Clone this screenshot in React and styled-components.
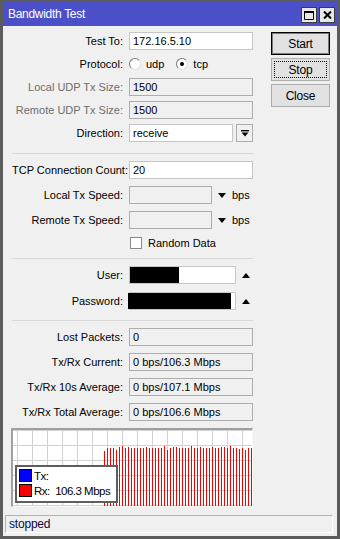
import React from 'react'
import styled, { createGlobalStyle } from 'styled-components';

const GlobalStyle = createGlobalStyle`
    html, body {
        margin: 0;
        padding: 0;
        background: #f0f0f0;
    }
    body {
        font-family: "Liberation Sans", Arial, sans-serif;
        font-size: 11px;
        color: #000;
    }
`

// rx bar tops, in chart pixels
const barTops = [
    21, 18, 18, 18, 20, 17, 16, 18, 17, 18, 18, 18, 18, 18, 17, 18, 18, 18, 18, 18,
    16, 20, 18, 17, 17, 18, 18, 18, 18, 16, 18, 18, 17, 18, 18, 18, 17, 18, 18, 17,
    17, 18, 16, 18, 18, 19, 18, 20, 18, 18,
];

const DownArrow = () => (
    <svg width="8" height="5" viewBox="0 0 8 5"><path d="M0 0h8L4 5z" fill="#000"/></svg>
);

const UpArrow = () => (
    <svg width="8" height="5" viewBox="0 0 8 5"><path d="M0 5h8L4 0z" fill="#000"/></svg>
);

const DropIcon = () => (
    <svg width="8" height="7" viewBox="0 0 8 7">
        <rect x="0" y="0" width="8" height="1.4" fill="#000"/>
        <path d="M0.5 2.5h7L4 6.5z" fill="#000"/>
    </svg>
);

const ChartGrid = () => {
    const vLines = [];
    for (let x = 4.5; x < 240; x += 15) vLines.push(x);
    const hLines = [];
    for (let y = 0.5; y < 77; y += 15) hLines.push(y);
    return (
        <svg width="239" height="76" viewBox="0 0 239 76" style={{display: 'block'}}>
            {vLines.map(x => <line key={'v' + x} x1={x} x2={x} y1="0" y2="76" stroke="#d2d2d2" strokeWidth="1"/>)}
            {hLines.map(y => <line key={'h' + y} x1="0" x2="239" y1={y} y2={y} stroke="#d2d2d2" strokeWidth="1"/>)}
            {barTops.map((t, i) => (
                <line key={'b' + i} x1={91.5 + i * 3} x2={91.5 + i * 3} y1={t} y2="76" stroke="#ff0000" strokeWidth="1"/>
            ))}
        </svg>
    );
}

const BandwidthTest = () => {
    return (
        <Window>
            <TitleBar>
                <Title>Bandwidth Test</Title>
                <TitleButtons>
                    <TitleButton>
                        <svg width="10" height="9" viewBox="0 0 10 9"><path d="M0.5 0.5h9v8h-9z M0.5 1.5h9" stroke="#000" strokeWidth="1" fill="none"/><rect x="0" y="0" width="10" height="2" fill="#000"/></svg>
                    </TitleButton>
                    <TitleButton>
                        <svg width="9" height="8" viewBox="0 0 9 8"><path d="M1 0.5l7 7M8 0.5l-7 7" stroke="#000" strokeWidth="2" fill="none"/></svg>
                    </TitleButton>
                </TitleButtons>
            </TitleBar>
            <Body>
                <Main>
                    <LeftColumn>
                        <Section $gap={5}>
                            <Row>
                                <Label>Test To:</Label>
                                <Field>172.16.5.10</Field>
                            </Row>
                            <Row>
                                <Label>Protocol:</Label>
                                <Radios>
                                    <RadioItem><Radio /> udp</RadioItem>
                                    <RadioItem><Radio $checked /> tcp</RadioItem>
                                </Radios>
                            </Row>
                            <Row>
                                <Label $disabled>Local UDP Tx Size:</Label>
                                <Field $disabled>1500</Field>
                            </Row>
                            <Row>
                                <Label $disabled>Remote UDP Tx Size:</Label>
                                <Field $disabled>1500</Field>
                            </Row>
                            <Row>
                                <Label>Direction:</Label>
                                <Inline>
                                    <Field $width={104}>receive</Field>
                                    <DropButton><DropIcon/></DropButton>
                                </Inline>
                            </Row>
                        </Section>
                        <Separator $top={11} $bottom={7}/>
                        <Section $gap={7}>
                            <Row>
                                <Label>TCP Connection Count:</Label>
                                <Field>20</Field>
                            </Row>
                            <Row>
                                <Label>Local Tx Speed:</Label>
                                <Inline>
                                    <Field $disabled $width={83}/>
                                    <ArrowSlot><DownArrow/></ArrowSlot>
                                    <Unit>bps</Unit>
                                </Inline>
                            </Row>
                            <Row>
                                <Label>Remote Tx Speed:</Label>
                                <Inline>
                                    <Field $disabled $width={83}/>
                                    <ArrowSlot><DownArrow/></ArrowSlot>
                                    <Unit>bps</Unit>
                                </Inline>
                            </Row>
                            <Row $height={14}>
                                <span/>
                                <CheckItem><Checkbox/> Random Data</CheckItem>
                            </Row>
                        </Section>
                        <Separator $top={8} $bottom={7}/>
                        <Section $gap={8}>
                            <Row>
                                <Label>User:</Label>
                                <Inline>
                                    <Field $width={107}><Redacted $width={49}/></Field>
                                    <ArrowSlot $wide><UpArrow/></ArrowSlot>
                                </Inline>
                            </Row>
                            <Row>
                                <Label>Password:</Label>
                                <Inline>
                                    <Field $width={107}><Redacted $width={103} $shift={-2}/></Field>
                                    <ArrowSlot $wide><UpArrow/></ArrowSlot>
                                </Inline>
                            </Row>
                        </Section>
                        <Separator $top={10} $bottom={7}/>
                        <Section $gap={7}>
                            <Row>
                                <Label>Lost Packets:</Label>
                                <Field $disabled>0</Field>
                            </Row>
                            <Row>
                                <Label>Tx/Rx Current:</Label>
                                <Field $disabled>0 bps/106.3 Mbps</Field>
                            </Row>
                            <Row>
                                <Label>Tx/Rx 10s Average:</Label>
                                <Field $disabled>0 bps/107.1 Mbps</Field>
                            </Row>
                            <Row>
                                <Label>Tx/Rx Total Average:</Label>
                                <Field $disabled>0 bps/106.6 Mbps</Field>
                            </Row>
                        </Section>
                        <Chart>
                            <ChartGrid/>
                            <Legend>
                                <LegendItem><Swatch $color="#0000ff"/>Tx:</LegendItem>
                                <LegendItem><Swatch $color="#ff0000"/>Rx:  106.3 Mbps</LegendItem>
                            </Legend>
                        </Chart>
                    </LeftColumn>
                    <Buttons>
                        <Button $default>Start</Button>
                        <Button $focused>Stop</Button>
                        <Button>Close</Button>
                    </Buttons>
                </Main>
                <StatusBar>stopped</StatusBar>
            </Body>
        </Window>
    )
}

const Window = styled.div`
    box-sizing: border-box;
    width: 340px;
    height: 539px;
    border-style: solid;
    border-color: #5c5c5c;
    border-width: 1px 3px 3px 3px;
    background: #f0f0f0;
    display: flex;
    flex-direction: column;
`

const TitleBar = styled.div`
    height: 25px;
    background: #4b50c8;
    display: flex;
    align-items: center;
    justify-content: space-between;
    padding: 0 2px 0 5px;
`

const Title = styled.div`
    color: #fff;
    font-size: 12px;
    letter-spacing: -0.3px;
    padding-top: 1px;
`

const TitleButtons = styled.div`
    display: flex;
    gap: 2px;
    padding-top: 3px;
`

const TitleButton = styled.div`
    box-sizing: border-box;
    width: 16px;
    height: 16px;
    background: #e8e8e8;
    border: 1px solid #3c3c3c;
    display: flex;
    align-items: center;
    justify-content: center;
`

const Body = styled.div`
    flex: 1;
    display: flex;
    flex-direction: column;
    justify-content: space-between;
    padding: 6px 4px 3px 2px;
`

const Main = styled.div`
    display: flex;
    align-items: flex-start;
`

const LeftColumn = styled.div`
    width: 241px;
    padding-left: 7px;
`

const Section = styled.div`
    display: flex;
    flex-direction: column;
    gap: ${p => p.$gap}px;
`

const Row = styled.div`
    display: grid;
    grid-template-columns: 111px 1fr;
    column-gap: 6px;
    align-items: center;
    height: ${p => p.$height || 18}px;
`

const Label = styled.div`
    text-align: right;
    white-space: nowrap;
    color: ${p => p.$disabled ? '#6d6d6d' : '#000'};
`

const Field = styled.div`
    box-sizing: border-box;
    width: ${p => p.$width ? p.$width + 'px' : '100%'};
    height: 18px;
    padding: 0 3px;
    line-height: 16px;
    white-space: nowrap;
    overflow: visible;
    background: ${p => p.$disabled ? '#f0f0f0' : '#fff'};
    border: 1px solid ${p => p.$disabled ? '#adadad' : '#c6c6c6'};
    position: relative;
`

const Redacted = styled.span`
    display: block;
    width: ${p => p.$width}px;
    height: 16px;
    margin-left: ${p => (p.$shift || 0) - 3}px;
    background: #000;
`

const Inline = styled.div`
    display: flex;
    align-items: center;
`

const DropButton = styled.div`
    box-sizing: border-box;
    width: 17px;
    height: 18px;
    margin-left: 3px;
    border: 1px solid #adadad;
    background: #f0f0f0;
    display: flex;
    align-items: center;
    justify-content: center;
`

const ArrowSlot = styled.div`
    width: ${p => p.$wide ? 19 : 20}px;
    display: flex;
    justify-content: center;
    align-items: center;
`

const Unit = styled.span`
    padding-left: 0px;
`

const Radios = styled.div`
    display: flex;
    gap: 12px;
`

const RadioItem = styled.div`
    display: flex;
    align-items: center;
    gap: 5px;
`

const Radio = styled.span`
    box-sizing: border-box;
    width: 12px;
    height: 12px;
    border-radius: 50%;
    border: 1px solid #7a7a7a;
    border-right-color: #e0e0e0;
    border-bottom-color: #e0e0e0;
    background: #fff;
    position: relative;

    &::after {
        content: '';
        display: ${p => p.$checked ? 'block' : 'none'};
        position: absolute;
        left: 3px;
        top: 3px;
        width: 4px;
        height: 4px;
        border-radius: 50%;
        background: #000;
    }
`

const CheckItem = styled.div`
    display: flex;
    align-items: center;
    gap: 6px;
    padding-left: 1px;
`

const Checkbox = styled.span`
    box-sizing: border-box;
    width: 12px;
    height: 12px;
    border: 1px solid #8a8a8a;
    background: #fff;
`

const Separator = styled.div`
    height: 1px;
    background: #d8d8d8;
    margin: ${p => p.$top}px 0 ${p => p.$bottom}px 0;
`

const Chart = styled.div`
    box-sizing: border-box;
    position: relative;
    width: 242px;
    height: 79px;
    margin: 7px 0 0 -1px;
    background: #fff;
    border-style: solid;
    border-color: #a0a0a0 #f8f8f8 #f8f8f8 #a0a0a0;
    border-width: 2px 1px 1px 2px;
`

const Legend = styled.div`
    box-sizing: border-box;
    position: absolute;
    left: 2px;
    top: 35px;
    width: 103px;
    height: 38px;
    background: #fff;
    border: 2px solid #5e5e5e;
    padding: 2px 0 0 2px;
    display: flex;
    flex-direction: column;
    gap: 2px;
`

const LegendItem = styled.div`
    display: flex;
    align-items: center;
    gap: 2px;
    height: 13px;
    font-size: 11.5px;
    letter-spacing: -0.5px;
    white-space: pre;
`

const Swatch = styled.span`
    box-sizing: border-box;
    width: 13px;
    height: 13px;
    border: 1px solid #000;
    background: ${p => p.$color};
`

const Buttons = styled.div`
    display: flex;
    flex-direction: column;
    gap: 3px;
    margin-left: 18px;
`

const Button = styled.div`
    box-sizing: border-box;
    width: 59px;
    height: 23px;
    display: flex;
    align-items: center;
    justify-content: center;
    font-size: 12px;
    letter-spacing: -0.2px;
    background: #e1e1e1;
    border: 1px solid ${p => p.$default ? '#000' : '#adadad'};
    box-shadow: ${p => p.$default ? 'inset 0 0 0 1px #7a7a7a' : 'none'};
    outline: ${p => p.$focused ? '1px dotted #000' : 'none'};
    outline-offset: -4px;
`

const StatusBar = styled.div`
    box-sizing: border-box;
    height: 18px;
    padding: 0 3px;
    line-height: 16px;
    border-style: solid;
    border-width: 1px;
    border-color: #b4b4b4 #ffffff #ffffff #b4b4b4;
    font-size: 12px;
    letter-spacing: -0.2px;
    color: #0a0a3a;
`

export default function App() {
    return (
        <>
            <GlobalStyle/>
            <BandwidthTest/>
        </>
    );
}
